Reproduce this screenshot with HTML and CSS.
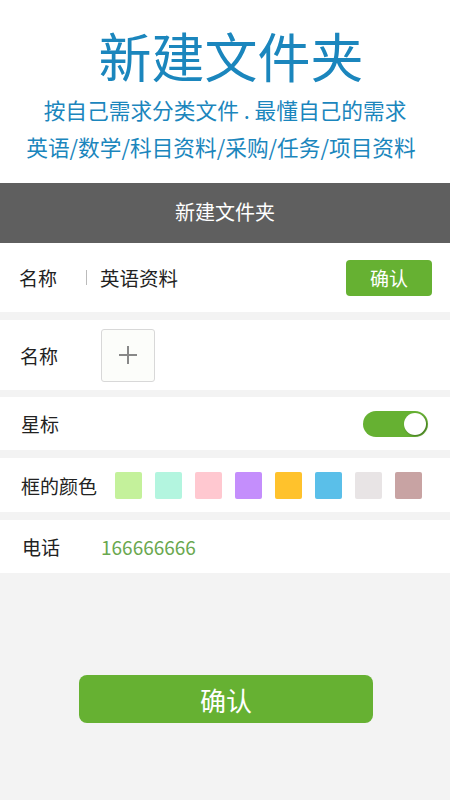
FILE: index.html
```html
<!DOCTYPE html>
<html lang="zh">
<head>
    <meta charset="UTF-8">
    <meta name="viewport" content="width=device-width, initial-scale=1.0">
    <title>新建文件夹</title>
    <link rel="stylesheet" href="styles.css">
</head>
<body>
<div class="header">
    <h1>新建文件夹</h1>
    <p class="sub">按自己需求分类文件 . 最懂自己的需求</p>
    <p class="sub sub-tags">英语/数学/科目资料/采购/任务/项目资料</p>
</div>

<div class="bar">新建文件夹</div>

<div class="row row-name">
    <span class="label">名称</span>
    <span class="sep"></span>
    <span class="value">英语资料</span>
    <button class="btn-small">确认</button>
</div>

<div class="row row-icon">
    <span class="label">名称</span>
    <div class="add-box">
        <svg width="20" height="20" viewBox="0 0 20 20">
            <path d="M10 1v18M1 10h18" stroke="#888" stroke-width="2" fill="none"/>
        </svg>
    </div>
</div>

<div class="row row-star">
    <span class="label">星标</span>
    <div class="toggle"><span class="knob"></span></div>
</div>

<div class="row row-color">
    <span class="label">框的颜色</span>
    <div class="swatches">
        <span class="swatch c1"></span>
        <span class="swatch c2"></span>
        <span class="swatch c3"></span>
        <span class="swatch c4"></span>
        <span class="swatch c5"></span>
        <span class="swatch c6"></span>
        <span class="swatch c7"></span>
        <span class="swatch c8"></span>
    </div>
</div>

<div class="row row-phone">
    <span class="label">电话</span>
    <span class="phone">166666666</span>
</div>

<div class="footer">
    <button class="btn-big">确认</button>
</div>
</body>
</html>
```

FILE: styles.css
```css
* {
    box-sizing: border-box;
    margin: 0;
    padding: 0;
}
body {
    font-family: "Noto Sans CJK SC", "Noto Sans", sans-serif;
    background-color: #f3f3f3;
    color: #222;
    width: 450px;
    min-height: 800px;
}
.header {
    background-color: #fff;
    text-align: center;
    padding-top: 22px;
    height: 183px;
}
h1 {
    font-size: 53px;
    font-weight: normal;
    color: #1b86bd;
    line-height: 66px;
    padding-left: 12px;
}
.sub {
    color: #1b86bd;
    font-size: 21.7px;
    line-height: 37px;
    position: relative;
    top: 3px;
}
.sub-tags {
    padding-right: 8px;
}
.bar {
    background-color: #5f5f5f;
    color: #fff;
    height: 60px;
    line-height: 58px;
    text-align: center;
    font-size: 20px;
}
.row {
    background-color: #fff;
    display: flex;
    align-items: center;
    padding: 0 18px 0 20px;
    margin-bottom: 8px;
    font-size: 19px;
}
.row-name {
    height: 69px;
    padding-left: 19px;
    padding-right: 18px;
}
.row-name .value {
    font-size: 19.5px;
}
.row-icon {
    height: 70px;
    margin-bottom: 7px;
}
.row-star {
    height: 53px;
    justify-content: space-between;
    padding-left: 21px;
    padding-right: 22px;
}
.row-color {
    height: 54px;
    padding-left: 21px;
}
.row-phone {
    height: 53px;
    padding-left: 22px;
    margin-bottom: 0;
}
.label {
    width: 81px;
    flex: none;
}
.row-color .label {
    width: 94px;
}
.row-name .label {
    width: 67px;
}
.row-phone .label {
    width: 79px;
}
.sep {
    width: 1px;
    height: 15px;
    background-color: #bbb;
    margin-right: 13px;
}
.value {
    flex: 1;
}
.btn-small {
    background-color: #66b132;
    color: #fff;
    border: none;
    border-radius: 4px;
    width: 86px;
    height: 36px;
    font-family: inherit;
    font-size: 19px;
}
.add-box {
    width: 54px;
    height: 53px;
    border: 1px solid #d8d8d8;
    border-radius: 3px;
    background-color: #fcfdfa;
    display: flex;
    align-items: center;
    justify-content: center;
}
.toggle {
    width: 65px;
    height: 26px;
    border-radius: 13px;
    background-color: #66b132;
    display: flex;
    align-items: center;
    justify-content: flex-end;
    padding-right: 2px;
}
.knob {
    width: 22px;
    height: 22px;
    border-radius: 50%;
    background-color: #fff;
    box-shadow: 1px 1px 2px rgba(0, 0, 0, 0.35);
}
.swatches {
    display: flex;
    gap: 13px;
}
.swatch {
    width: 27px;
    height: 27px;
    border-radius: 2px;
}
.c1 { background-color: #c4f19b; }
.c2 { background-color: #b3f5df; }
.c3 { background-color: #ffc8d0; }
.c4 { background-color: #c48efc; }
.c5 { background-color: #ffc22c; }
.c6 { background-color: #5abfe9; }
.c7 { background-color: #e8e4e5; }
.c8 { background-color: #c8a3a3; }
.phone {
    color: #6aa84f;
    font-size: 19px;
}
.footer {
    padding-top: 102px;
    display: flex;
    justify-content: center;
}
.btn-big {
    width: 294px;
    height: 48px;
    margin-left: 2px;
    background-color: #66b132;
    color: #fff;
    border: none;
    border-radius: 8px;
    font-family: inherit;
    font-size: 26px;
}
```
